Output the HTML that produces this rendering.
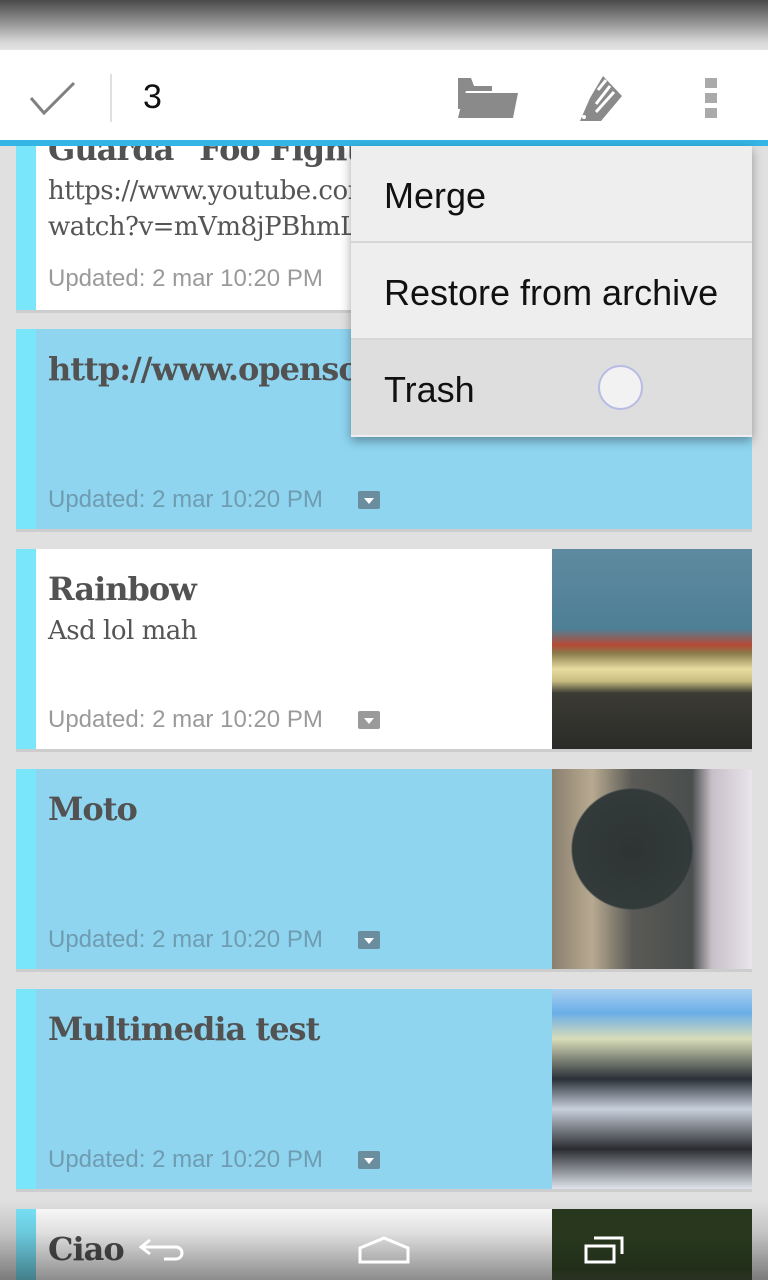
<!DOCTYPE html>
<html style="width:768px;height:1280px;overflow:hidden"><head><meta charset="utf-8"><style>
*{margin:0;padding:0;box-sizing:border-box}
body{width:768px;height:1280px;overflow:hidden;background:#e0e0e0;position:relative;font-family:"Roboto","Liberation Sans",sans-serif}
.status{position:absolute;left:0;top:0;width:768px;height:50px;background:linear-gradient(#4a4a4a,#8a8a8a 40%,#d8d8d8 85%,#e2e2e2)}
.bar{position:absolute;left:0;top:50px;width:768px;height:90px;background:#fff}
.blue{position:absolute;left:0;top:140px;width:768px;height:6px;background:#33b5e5;z-index:5}
.card{position:absolute;left:16px;width:736px;height:200px;box-shadow:0 3px 0 #cdcdcd;overflow:hidden}
.card .acc{position:absolute;left:0;top:0;width:20px;height:100%;background:#7ae6fc}
.wh{background:#fff}.bl{background:#8fd5f0}
.t{position:absolute;left:32px;top:21px;font:bold 32px "DejaVu Serif","Liberation Serif",serif;color:#525252;letter-spacing:-1px;white-space:nowrap}
.b{position:absolute;left:32px;font:26px "DejaVu Serif","Liberation Serif",serif;color:#555;white-space:nowrap;letter-spacing:-0.5px}
.d{position:absolute;left:32px;top:157px;font:24px "Liberation Sans",sans-serif;color:#9a9a9a}
.bl .d{color:#6f9cb0}
.arc{position:absolute;left:342px;top:162px;width:22px;height:18px;background:#9a9a9a;border-radius:2px}
.bl .arc{background:#6a8e9e}
.arc:after{content:"";position:absolute;left:6px;top:7px;border:5px solid transparent;border-top:6px solid #fff}
.img{position:absolute;right:0;top:0;width:200px;height:200px}
.menu{position:absolute;left:351px;top:146px;width:401px;height:291px;background:#eeeeee;box-shadow:0 4px 10px rgba(0,0,0,.35);z-index:6}
.mi{height:97px;border-bottom:2px solid #d6d6d6;font:36px "Liberation Sans",sans-serif;color:#111;padding-left:33px;line-height:99px}
.nav{position:absolute;left:0;top:1200px;width:768px;height:80px;background:linear-gradient(rgba(0,0,0,0),rgba(0,0,0,.12) 40%,rgba(0,0,0,.45));z-index:8}
</style></head><body>
<div class="status"></div>

<div class="card wh" style="top:110px"><div class="acc"></div>
<div class="t" style="top:20px">Guarda "Foo Fighters</div>
<div class="b" style="top:66px">https://www.youtube.com/</div>
<div class="b" style="top:102px">watch?v=mVm8jPBhmL</div>
<div class="d" style="top:155px">Updated: 2 mar 10:20 PM</div></div>

<div class="card bl" style="top:329px"><div class="acc"></div>
<div class="t">http://www.opensource</div>
<div class="d">Updated: 2 mar 10:20 PM</div><div class="arc"></div></div>

<div class="card wh" style="top:549px"><div class="acc"></div>
<div class="t">Rainbow</div><div class="b" style="top:67px">Asd lol mah</div>
<div class="d">Updated: 2 mar 10:20 PM</div><div class="arc"></div>
<div class="img" style="background:linear-gradient(#5f8aa0 0%,#4e7f95 40%,#b64a36 48%,#8a7a4a 52%,#e8dca0 60%,#c8bc80 66%,#3c3c34 72%,#2a2a28 100%)"></div></div>

<div class="card bl" style="top:769px"><div class="acc"></div>
<div class="t">Moto</div>
<div class="d">Updated: 2 mar 10:20 PM</div><div class="arc"></div>
<div class="img" style="background:radial-gradient(circle at 40% 40%,#2e3434 0,#323a3a 35%,transparent 36%),linear-gradient(90deg,#8a8070 0%,#b8aa90 20%,#5a5a56 40%,#4a4e4e 70%,#c8c0c8 80%,#e8e4ec 100%)"></div></div>

<div class="card bl" style="top:989px"><div class="acc"></div>
<div class="t">Multimedia test</div>
<div class="d">Updated: 2 mar 10:20 PM</div><div class="arc"></div>
<div class="img" style="background:linear-gradient(#a8d0f0 0%,#6aaee8 12%,#d8dcb8 25%,#2a3038 45%,#c8d0dc 60%,#2a2c30 80%,#dfe4ec 100%)"></div></div>

<div class="card wh" style="top:1209px;height:71px;box-shadow:none"><div class="acc"></div>
<div class="t">Ciao</div>
<div class="img" style="background:linear-gradient(#28381e 0%,#354a28 30%,#9a9a8c 55%,#7a7a70 100%)"></div></div>

<div class="bar">
<svg style="position:absolute;left:28px;top:30px" width="50" height="36"><polyline points="3,18 16,33 46,3" fill="none" stroke="#808080" stroke-width="3"/></svg>
<div style="position:absolute;left:110px;top:24px;width:2px;height:48px;background:#e0e0e0"></div>
<div style="position:absolute;left:143px;top:28px;font:34px 'Liberation Sans',sans-serif;color:#111">3</div>
<svg style="position:absolute;left:458px;top:26px" width="60" height="45"><path d="M0 2H13L16 10H34V15H8L2 33H0Z M6 17H60L55 42H0Z M0 33L6 17" fill="#8a8a8a"/></svg>
<svg style="position:absolute;left:576px;top:24px" width="48" height="50"><path d="M14 24L27 2L46 22L25 47L4 47Z" fill="#8a8a8a"/><path d="M22 16L30 6M20 30L34 12M20 38L38 18" stroke="#fff" stroke-width="3"/><circle cx="8" cy="43" r="2" fill="#fff"/></svg>
<div style="position:absolute;left:705px;top:28px;width:12px;height:10px;background:#aaa"></div>
<div style="position:absolute;left:705px;top:43px;width:12px;height:10px;background:#aaa"></div>
<div style="position:absolute;left:705px;top:58px;width:12px;height:10px;background:#aaa"></div>
</div>
<div class="blue"></div>

<div class="menu">
<div class="mi">Merge</div>
<div class="mi">Restore from archive</div>
<div class="mi" style="border:0;background:#dedede;height:95px;position:relative">Trash
<div style="position:absolute;left:247px;top:25px;width:45px;height:45px;border-radius:50%;background:#f2f2f2;border:2px solid #b8bce4"></div></div>
</div>

<div class="nav">
<svg style="position:absolute;left:138px;top:36px" width="50" height="30"><path d="M12 4L3 11L12 18M3 11H38A6 6 0 0 1 38 23H26" fill="none" stroke="#fff" stroke-width="3"/></svg>
<svg style="position:absolute;left:358px;top:36px" width="52" height="30"><path d="M2 12L26 2L50 12V26H2Z" fill="none" stroke="#fff" stroke-width="3"/></svg>
<svg style="position:absolute;left:584px;top:34px" width="50" height="32"><path d="M2 12H30V28H2Z M10 4H38V20" fill="none" stroke="#fff" stroke-width="3"/></svg>
</div>
</body></html>
